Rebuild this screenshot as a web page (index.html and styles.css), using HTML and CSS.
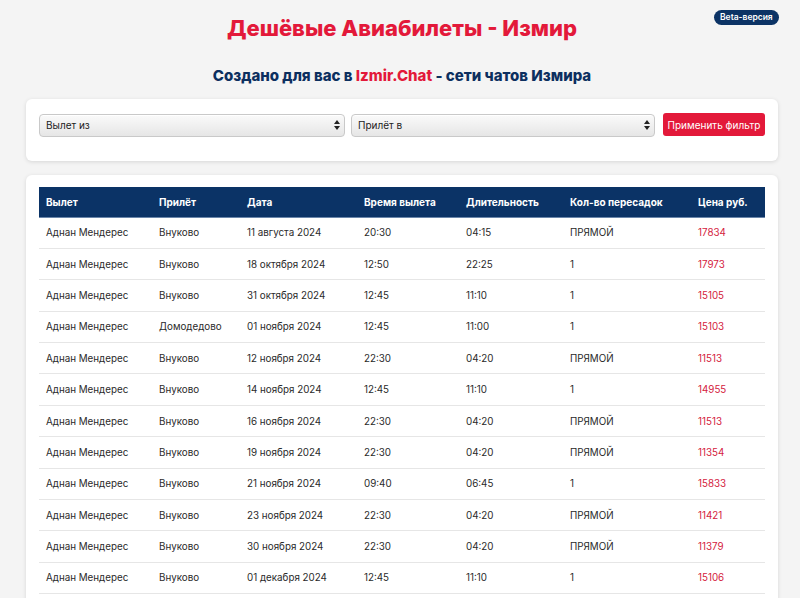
FILE: index.html
```html
<!DOCTYPE html>
<html lang="ru">
<head>
<meta charset="utf-8">
<title>Дешёвые Авиабилеты - Измир</title>
<link rel="stylesheet" href="styles.css">
</head>
<body>
<span class="beta">Beta-версия</span>
<header class="head">
  <h1 class="title">Дешёвые Авиабилеты - Измир</h1>
  <p class="subtitle">Создано для вас в <span class="brand">Izmir.Chat</span> - сети чатов Измира</p>
</header>
<section class="card filter">
  <div class="sel sel-from">
    <select><option>Вылет из</option></select>
    <svg class="arr" width="6" height="10" viewBox="0 0 6 10"><path d="M3 0L6 4H0z M3 10L0 6h6z" fill="#222"/></svg>
  </div>
  <div class="sel sel-to">
    <select><option>Прилёт в</option></select>
    <svg class="arr" width="6" height="10" viewBox="0 0 6 10"><path d="M3 0L6 4H0z M3 10L0 6h6z" fill="#222"/></svg>
  </div>
  <button class="btn">Применить фильтр</button>
</section>
<section class="card tablecard">
  <table class="flights">
    <thead>
      <tr><th class="c1">Вылет</th><th class="c2">Прилёт</th><th class="c3">Дата</th><th class="c4">Время вылета</th><th class="c5">Длительность</th><th class="c6">Кол-во пересадок</th><th class="c7">Цена руб.</th></tr>
    </thead>
    <tbody>
      <tr><td>Аднан Мендерес</td><td>Внуково</td><td>11 августа 2024</td><td>20:30</td><td>04:15</td><td>ПРЯМОЙ</td><td class="price">17834</td></tr>
      <tr><td>Аднан Мендерес</td><td>Внуково</td><td>18 октября 2024</td><td>12:50</td><td>22:25</td><td>1</td><td class="price">17973</td></tr>
      <tr><td>Аднан Мендерес</td><td>Внуково</td><td>31 октября 2024</td><td>12:45</td><td>11:10</td><td>1</td><td class="price">15105</td></tr>
      <tr><td>Аднан Мендерес</td><td>Домодедово</td><td>01 ноября 2024</td><td>12:45</td><td>11:00</td><td>1</td><td class="price">15103</td></tr>
      <tr><td>Аднан Мендерес</td><td>Внуково</td><td>12 ноября 2024</td><td>22:30</td><td>04:20</td><td>ПРЯМОЙ</td><td class="price">11513</td></tr>
      <tr><td>Аднан Мендерес</td><td>Внуково</td><td>14 ноября 2024</td><td>12:45</td><td>11:10</td><td>1</td><td class="price">14955</td></tr>
      <tr><td>Аднан Мендерес</td><td>Внуково</td><td>16 ноября 2024</td><td>22:30</td><td>04:20</td><td>ПРЯМОЙ</td><td class="price">11513</td></tr>
      <tr><td>Аднан Мендерес</td><td>Внуково</td><td>19 ноября 2024</td><td>22:30</td><td>04:20</td><td>ПРЯМОЙ</td><td class="price">11354</td></tr>
      <tr><td>Аднан Мендерес</td><td>Внуково</td><td>21 ноября 2024</td><td>09:40</td><td>06:45</td><td>1</td><td class="price">15833</td></tr>
      <tr><td>Аднан Мендерес</td><td>Внуково</td><td>23 ноября 2024</td><td>22:30</td><td>04:20</td><td>ПРЯМОЙ</td><td class="price">11421</td></tr>
      <tr><td>Аднан Мендерес</td><td>Внуково</td><td>30 ноября 2024</td><td>22:30</td><td>04:20</td><td>ПРЯМОЙ</td><td class="price">11379</td></tr>
      <tr><td>Аднан Мендерес</td><td>Внуково</td><td>01 декабря 2024</td><td>12:45</td><td>11:10</td><td>1</td><td class="price">15106</td></tr>
      <tr class="blank"><td></td><td></td><td></td><td></td><td></td><td></td><td></td></tr>
    </tbody>
  </table>
</section>
</body>
</html>
```
FILE: styles.css
```css
* { box-sizing: border-box; }
html, body { margin: 0; }
body {
  background: #f4f4f4;
  font-family: "Inter", "Open Sans", "Liberation Sans", sans-serif;
  color: #222;
  padding: 0 22px 0 26px;
  position: relative;
  overflow: hidden;
  height: 598px;
}
.beta {
  position: absolute;
  top: 10px;
  left: 714px;
  background: #0c3365;
  color: #fff;
  font-size: 8.5px;
  font-weight: 600;
  line-height: 15px;
  padding: 0 6px;
  border-radius: 8px;
}
.head { text-align: center; padding-top: 14px; }
.title {
  margin: 0;
  color: #e3193a;
  font-size: 22px;
  font-weight: 800;
  line-height: 28px;
}
.subtitle {
  margin: 24px 0 0;
  color: #0c2f5f;
  font-size: 15px;
  font-weight: 800;
  line-height: 20px;
}
.brand { color: #e3193a; }
.card {
  background: #fff;
  border-radius: 6px;
  box-shadow: 0 1px 4px rgba(0,0,0,0.12);
}
.filter {
  margin-top: 13px;
  height: 62px;
  padding: 14px 13px 0 13px;
  display: flex;
  align-items: flex-start;
}
.sel { position: relative; height: 23px; }
.sel-from { width: 306px; margin-right: 6px; }
.sel-to { width: 304px; margin-right: 8px; }
.sel select {
  appearance: none;
  -webkit-appearance: none;
  width: 100%;
  height: 23px;
  border: 1px solid #c9c9c9;
  border-radius: 4px;
  background: linear-gradient(#fafafa, #e6e6e6);
  font-family: inherit;
  font-size: 10px;
  color: #222;
  padding: 0 6px;
  box-shadow: inset 0 1px 0 #fff;
}
.arr { position: absolute; right: 5px; top: 7px; }
.btn {
  width: 102px;
  height: 23px;
  border: 0;
  border-radius: 3px;
  background: #e3193a;
  color: #fff;
  font-family: inherit;
  font-size: 10px;
  padding: 0;
}
.tablecard {
  margin-top: 14px;
  padding: 12px 13px 0 13px;
  height: 440px;
}
.flights {
  width: 726px;
  border-collapse: collapse;
  font-size: 9.8px;
  table-layout: fixed;
}
.flights th {
  background: #0b3366;
  color: #fff;
  font-weight: 700;
  font-size: 10px;
  text-align: left;
  height: 30px;
  padding: 0 7px;
  border-bottom: 1px solid #6a86aa;
}
.flights td {
  height: 31.4px;
  padding: 0 7px;
  border-bottom: 1px solid #e6e6e6;
  color: #2a2a2a;
}
.flights .price { color: #d4213d; }
.c1 { width: 113px; }
.c2 { width: 88px; }
.c3 { width: 117px; }
.c4 { width: 102px; }
.c5 { width: 104px; }
.c6 { width: 128px; }
.c7 { width: 74px; }
```
